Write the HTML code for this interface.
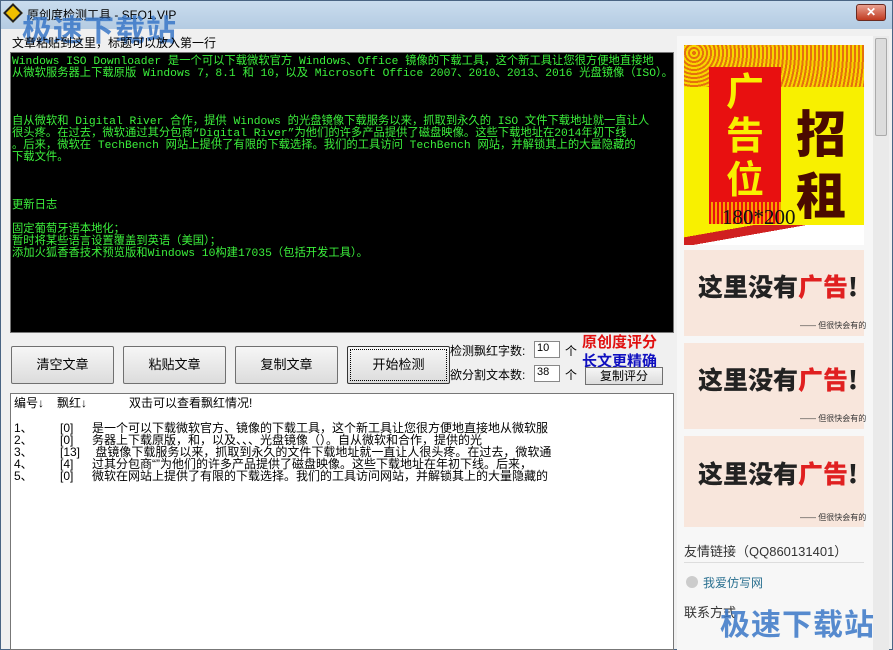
<!DOCTYPE html>
<html><head><meta charset="utf-8"><style>
*{margin:0;padding:0;box-sizing:border-box}
body{width:893px;height:650px;overflow:hidden;background:#6f8fae;font-family:"Liberation Sans","Noto Sans CJK SC",sans-serif;position:relative}
.abs{position:absolute}
.win{left:0;top:0;width:893px;height:650px;background:linear-gradient(#c9dcee,#b4cbe2 28px,#f0f0f0 28px);border:1px solid #4a6584}
.mono{font-family:"Liberation Mono","Noto Sans CJK SC",monospace}
.btn{position:absolute;top:346px;height:38px;width:103px;background:linear-gradient(#f6f6f6,#dcdcdc);border:1px solid #707070;border-radius:2px;font-size:13px;text-align:center;line-height:36px;color:#000}
.wm{color:#3a78c8;font-weight:bold;font-size:30px;font-family:"Noto Sans CJK SC",sans-serif;opacity:.85;letter-spacing:1px}
.r span{position:absolute}
</style></head><body>
<div class="abs win"></div>
<div class="abs" style="left:6px;top:6px;width:14px;height:14px;background:#f0c000;transform:rotate(45deg);border:2px solid #222"></div>
<div class="abs" style="left:27px;top:6px;font-size:12px;color:#000">原创度检测工具 - SEO1.VIP</div>
<div class="abs" style="left:856px;top:4px;width:30px;height:17px;background:linear-gradient(#e8a090,#c03a20);border:1px solid #6a2a20;border-radius:3px;color:#fff;font-size:12px;text-align:center;line-height:15px;font-weight:bold">✕</div>
<div class="abs wm" style="left:22px;top:6px">极速下载站</div>
<div class="abs" style="left:12px;top:34px;font-size:12px">文章粘贴到这里，标题可以放入第一行</div>
<div class="abs mono" style="left:10px;top:52px;width:664px;height:281px;background:#000;border:1px solid #777;color:#3cf03c;font-size:11.3px;line-height:12px;padding:3px 1px;white-space:pre;overflow:hidden">Windows ISO Downloader 是一个可以下载微软官方 Windows、Office 镜像的下载工具，这个新工具让您很方便地直接地
从微软服务器上下载原版 Windows 7，8.1 和 10，以及 Microsoft Office 2007、2010、2013、2016 光盘镜像（ISO）。



自从微软和 Digital River 合作，提供 Windows 的光盘镜像下载服务以来，抓取到永久的 ISO 文件下载地址就一直让人
很头疼。在过去，微软通过其分包商“Digital River”为他们的许多产品提供了磁盘映像。这些下载地址在2014年初下线
。后来，微软在 TechBench 网站上提供了有限的下载选择。我们的工具访问 TechBench 网站，并解锁其上的大量隐藏的
下载文件。



更新日志

固定葡萄牙语本地化；
暂时将某些语言设置覆盖到英语（美国）；
添加火狐香香技术预览版和Windows 10构建17035（包括开发工具）。</div>
<div class="btn" style="left:11px">清空文章</div>
<div class="btn" style="left:123px">粘贴文章</div>
<div class="btn" style="left:235px">复制文章</div>
<div class="btn" style="left:347px;border:1px solid #333;outline:1px dotted #000;outline-offset:-4px">开始检测</div>
<div class="abs" style="left:450px;top:342px;font-size:12px">检测飘红字数:</div>
<div class="abs" style="left:534px;top:341px;width:26px;height:17px;background:#fff;border:1px solid #888;font-size:11px;padding-left:2px">10</div>
<div class="abs" style="left:565px;top:342px;font-size:12px">个</div>
<div class="abs" style="left:450px;top:366px;font-size:12px">欲分割文本数:</div>
<div class="abs" style="left:534px;top:365px;width:26px;height:17px;background:#fff;border:1px solid #888;font-size:11px;padding-left:2px">38</div>
<div class="abs" style="left:565px;top:366px;font-size:12px">个</div>
<div class="abs" style="left:582px;top:331px;font-size:15px;font-weight:bold;color:#e01010">原创度评分</div>
<div class="abs" style="left:582px;top:350px;font-size:15px;font-weight:bold;color:#1010c0">长文更精确</div>
<div class="abs" style="left:585px;top:367px;width:78px;height:18px;background:linear-gradient(#f6f6f6,#dcdcdc);border:1px solid #707070;font-size:12px;text-align:center;line-height:16px">复制评分</div>
<div class="abs r" style="left:10px;top:393px;width:664px;height:257px;background:#fff;border:1px solid #777;font-size:12px;line-height:12px;white-space:pre">
<span style="left:3px;top:3px">编号↓</span><span style="left:46px;top:3px">飘红↓</span><span style="left:118px;top:3px">双击可以查看飘红情况!</span>
<span style="left:3px;top:28px">1、<br>2、<br>3、<br>4、<br>5、</span>
<span style="left:49px;top:28px">[0]<br>[0]<br>[13]<br>[4]<br>[0]</span>
<span style="left:81px;top:28px">是一个可以下载微软官方、镜像的下载工具，这个新工具让您很方便地直接地从微软服
务器上下载原版，和，以及、、、光盘镜像（）。自从微软和合作，提供的光
 盘镜像下载服务以来，抓取到永久的文件下载地址就一直让人很头疼。在过去，微软通
过其分包商“”为他们的许多产品提供了磁盘映像。这些下载地址在年初下线。后来，
微软在网站上提供了有限的下载选择。我们的工具访问网站，并解锁其上的大量隐藏的</span></div>
<div class="abs" style="left:677px;top:36px;width:196px;height:614px;background:#f7f7f7"></div>
<div class="abs" style="left:873px;top:36px;width:16px;height:614px;background:#eaeaea"></div>
<div class="abs" style="left:875px;top:38px;width:12px;height:98px;background:#dcdcdc;border:1px solid #aaa;border-radius:2px"></div>
<div class="abs" style="left:684px;top:45px;width:180px;height:200px;background:#f8f000;overflow:hidden">
 <div class="abs" style="left:0;top:0;width:180px;height:42px;background:repeating-radial-gradient(circle at 10px 8px,#e05010 0 2px,#f8d000 2px 4px);opacity:.8"></div>
 <div class="abs" style="left:25px;top:22px;width:72px;height:135px;background:#e81010;color:#f8f000;font-size:38px;font-weight:bold;line-height:44px;text-align:center;font-family:'Noto Sans CJK SC',sans-serif">广<br>告<br>位</div>
 <div class="abs" style="left:25px;top:157px;width:72px;height:22px;background:repeating-linear-gradient(90deg,#e81010 0 2px,#f8a000 2px 4px)"></div>
 <div class="abs" style="left:112px;top:55px;color:#4a0a00;font-size:50px;font-weight:900;line-height:62px;font-family:'Noto Sans CJK SC',sans-serif">招<br>租</div>
 <div class="abs" style="left:0;top:180px;width:180px;height:30px;background:linear-gradient(170deg,#f8f000 0 20%,#d02020 20% 35%,#fff 35%)"></div>
 <div class="abs" style="left:38px;top:160px;font-family:'Liberation Serif',serif;font-size:21px;color:#111">180*200</div>
</div>
<div class="abs" style="left:684px;top:250px;width:180px;height:86px;background:#f8e6dc"></div>
<div class="abs" style="left:684px;top:343px;width:180px;height:86px;background:#f8e6dc"></div>
<div class="abs" style="left:684px;top:436px;width:180px;height:91px;background:#f8e6dc"></div>
<div class="abs" style="left:698px;top:268px;font-size:25px;font-weight:900;color:#222;font-family:'Noto Sans CJK SC',sans-serif">这里没有<span style="color:#e02020">广告</span>!</div>
<div class="abs" style="left:698px;top:361px;font-size:25px;font-weight:900;color:#222;font-family:'Noto Sans CJK SC',sans-serif">这里没有<span style="color:#e02020">广告</span>!</div>
<div class="abs" style="left:698px;top:455px;font-size:25px;font-weight:900;color:#222;font-family:'Noto Sans CJK SC',sans-serif">这里没有<span style="color:#e02020">广告</span>!</div>
<div class="abs" style="left:800px;top:320px;font-size:8px;color:#333">—— 但很快会有的</div>
<div class="abs" style="left:800px;top:413px;font-size:8px;color:#333">—— 但很快会有的</div>
<div class="abs" style="left:800px;top:512px;font-size:8px;color:#333">—— 但很快会有的</div>
<div class="abs" style="left:684px;top:541px;font-size:13px;color:#333">友情链接（QQ860131401）</div>
<div class="abs" style="left:684px;top:562px;width:180px;border-top:1px solid #ddd"></div>
<div class="abs" style="left:686px;top:576px;width:12px;height:12px;border-radius:50%;background:#ccc"></div>
<div class="abs" style="left:703px;top:574px;font-size:12px;color:#2a7090">我爱仿写网</div>
<div class="abs" style="left:684px;top:602px;font-size:13px;color:#333">联系方式</div>
<div class="abs wm" style="left:720px;top:600px">极速下载站</div>
</body></html>
